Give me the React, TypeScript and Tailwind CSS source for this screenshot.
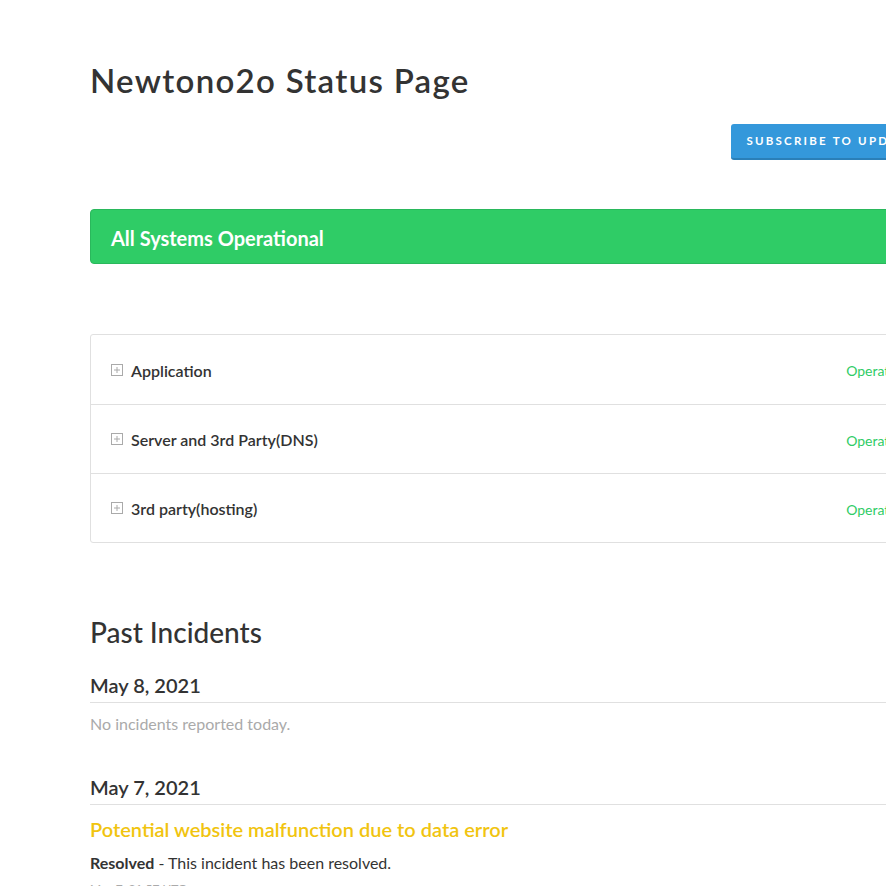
const components = ["Application", "Server and 3rd Party(DNS)", "3rd party(hosting)"];

const PlusBox = () => (
  <svg width="12" height="12" viewBox="0 0 12 12" className="shrink-0">
    <rect x="0.5" y="0.5" width="11" height="11" fill="none" stroke="#aaa" />
    <path d="M3 6h6M6 3v6" stroke="#aaa" strokeWidth="1" />
  </svg>
);

const App = () => (
  <div className="w-[886px] h-[886px] overflow-hidden bg-white text-[#333] font-['Lato','Liberation_Sans',sans-serif]">
    <div className="w-[850px] ml-[90px] pt-[60px]">
      <h1 className="text-[33px] leading-[40px] font-semibold tracking-[1.3px]">Newtono2o Status Page</h1>
      <div className="flex justify-end mt-[24px]">
        <button className="h-[36px] px-[15px] bg-[#3498db] border-b-2 border-[#2a7fb8] rounded-[3px] text-white text-[11.5px] font-bold tracking-[2.25px] uppercase">
          Subscribe to Updates
        </button>
      </div>
      <div className="mt-[49px] h-[55px] bg-[#2fcc66] rounded-[4px] border border-[#2ab85c] flex items-center px-[20px]">
        <span className="text-white text-[20px] font-bold pt-[3px]">All Systems Operational</span>
      </div>
      <div className="mt-[70px] border border-[#e0e0e0] rounded-[3px]">
        {components.map((c, i) => (
          <div
            key={c}
            className={`h-[69px] flex items-center px-[20px] ${i > 0 ? "border-t border-[#e0e0e0]" : ""}`}
          >
            <PlusBox />
            <span className="ml-[8px] text-[16px] font-semibold pt-[2px]">{c}</span>
            <span className="ml-auto text-[14px] text-[#2fcc66] pt-[2px] mr-[0px]">Operational</span>
          </div>
        ))}
      </div>
      <h2 className="mt-[72px] text-[28px] leading-[34px] font-medium">Past Incidents</h2>
      <div className="mt-[24px]">
        <h3 className="text-[20px] leading-[24px] font-semibold pb-[5px] border-b border-[#e0e0e0]">May 8, 2021</h3>
        <p className="mt-[10px] text-[16px] leading-[22px] text-[#aaa]">No incidents reported today.</p>
      </div>
      <div className="mt-[40px]">
        <h3 className="text-[20px] leading-[24px] font-semibold pb-[5px] border-b border-[#e0e0e0]">May 7, 2021</h3>
        <p className="mt-[11px] text-[20px] leading-[26px] font-semibold text-[#f1c40f]">Potential website malfunction due to data error</p>
        <p className="mt-[10px] text-[16px] leading-[22px]">
          <strong>Resolved</strong> - This incident has been resolved.
        </p>
        <p className="mt-[6px] text-[12px] text-[#aaa]">May 7, 21:57 UTC</p>
      </div>
    </div>
  </div>
);

export default App;
